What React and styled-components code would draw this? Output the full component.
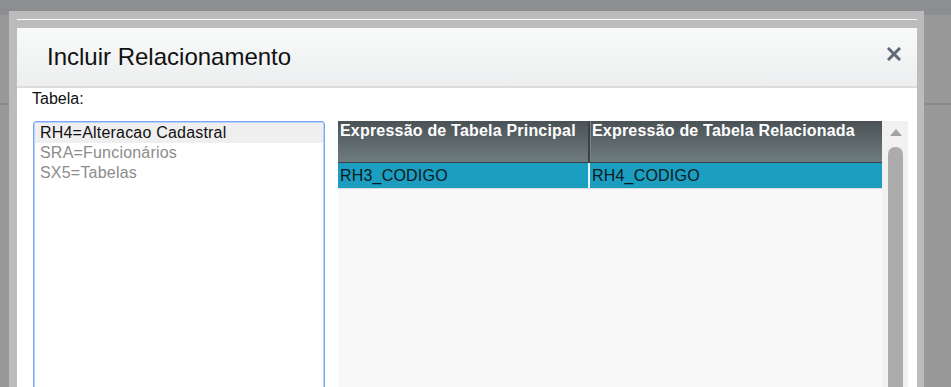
import React from "react";
import styled, { createGlobalStyle } from "styled-components";

const GlobalStyle = createGlobalStyle`
  html, body {
    margin: 0;
    height: 100%;
    overflow: hidden;
  }
  body {
    font-family: "Liberation Sans", Arial, sans-serif;
    background: linear-gradient(
      to bottom,
      #8c8e92 0,
      #8c8e92 15px,
      #999999 15px,
      #999999 103px,
      #8b8b8b 103px,
      #8b8b8b 105px,
      #999999 105px
    );
  }
`;

const tables = [
  { label: "RH4=Alteracao Cadastral", selected: true },
  { label: "SRA=Funcionários" },
  { label: "SX5=Tabelas" },
];

const columns = ["Expressão de Tabela Principal", "Expressão de Tabela Relacionada"];
const rows = [["RH3_CODIGO", "RH4_CODIGO"]];

const App = () => {
  return (
    <>
      <GlobalStyle />
      <Dialog>
        <TopRule />
        <Content>
          <Header>
            <Title>Incluir Relacionamento</Title>
            <CloseButton aria-label="Fechar">
              <svg width="14" height="14" viewBox="0 0 14 14">
                <path
                  d="M2 2 L12 12 M12 2 L2 12"
                  stroke="#5f6a76"
                  strokeWidth="3"
                  strokeLinecap="square"
                />
              </svg>
            </CloseButton>
          </Header>
          <Body>
            <Label>Tabela:</Label>
            <Panels>
              <ListBox>
                {tables.map((t) => (
                  <ListItem key={t.label} selected={t.selected}>
                    {t.label}
                  </ListItem>
                ))}
              </ListBox>
              <Grid>
                <HeadRow>
                  {columns.map((c) => (
                    <HeadCell key={c}>{c}</HeadCell>
                  ))}
                </HeadRow>
                {rows.map((r, i) => (
                  <DataRow key={i} active={i === 0}>
                    {r.map((v) => (
                      <DataCell key={v}>{v}</DataCell>
                    ))}
                  </DataRow>
                ))}
              </Grid>
              <ScrollBar>
                <ArrowUp />
                <Thumb />
              </ScrollBar>
            </Panels>
          </Body>
        </Content>
      </Dialog>
    </>
  );
};

const Dialog = styled.div`
  margin: 11px 0 0 9px;
  width: 915px;
  height: 420px;
  box-sizing: border-box;
  padding: 8px 7px 0 8px;
  background: #bcbcbc;
  display: flex;
  flex-direction: column;
`;

const TopRule = styled.div`
  height: 1px;
  background: #ffffff;
  margin-bottom: 8px;
`;

const Content = styled.div`
  flex: 1;
  background: #ffffff;
  display: flex;
  flex-direction: column;
`;

const Header = styled.div`
  height: 58px;
  display: flex;
  align-items: center;
  justify-content: space-between;
  padding: 0 16px 0 30px;
  background: linear-gradient(to bottom, #f9fafa, #eceeef);
  border-bottom: 2px solid #dcdcdc;
`;

const Title = styled.h1`
  margin: 0;
  font-size: 24px;
  font-weight: normal;
  color: #111;
`;

const CloseButton = styled.button`
  border: none;
  background: transparent;
  padding: 0;
  margin-top: -7px;
  width: 14px;
  height: 14px;
  display: flex;
  cursor: pointer;
`;

const Body = styled.div`
  flex: 1;
  padding: 2px 0 0 15px;
  display: flex;
  flex-direction: column;
`;

const Label = styled.div`
  font-size: 16px;
  color: #111;
  line-height: 18px;
`;

const Panels = styled.div`
  flex: 1;
  display: flex;
  margin-top: 13px;
  padding-left: 1px;
`;

const ListBox = styled.div`
  width: 292px;
  box-sizing: border-box;
  border: 1px solid #79a6f6;
  box-shadow: inset 0 0 0 1px #b9d1fb;
  border-radius: 3px;
  padding: 1px;
  display: flex;
  flex-direction: column;
`;

const ListItem = styled.div`
  font-size: 16px;
  letter-spacing: 0.2px;
  line-height: 18px;
  padding: 1px 5px;
  color: ${({ selected }) => (selected ? "#111" : "#8c8c8c")};
  background: ${({ selected }) => (selected ? "#efefef" : "transparent")};
  white-space: nowrap;
`;

const Grid = styled.div`
  margin-left: 13px;
  width: 544px;
  background: #f8f8f8;
  display: flex;
  flex-direction: column;
`;

const HeadRow = styled.div`
  display: grid;
  grid-template-columns: 250px 1fr;
  height: 41px;
  background: linear-gradient(to bottom, #4a5256, #6f7c7d);
  border-bottom: 1px solid #394043;
`;

const HeadCell = styled.div`
  font-size: 16px;
  font-weight: bold;
  letter-spacing: 0.2px;
  color: #ffffff;
  line-height: 18px;
  padding: 1px 2px;
  white-space: nowrap;
  overflow: hidden;
  & + & {
    border-left: 2px solid #3c4245;
    box-shadow: inset 1px 0 0 #7b8688;
  }
`;

const DataRow = styled.div`
  display: grid;
  grid-template-columns: 250px 1fr;
  height: 25px;
  background: ${({ active }) => (active ? "#1c9ec0" : "transparent")};
  border-bottom: 1px solid #dcdcdc;
`;

const DataCell = styled.div`
  font-size: 16px;
  letter-spacing: 0.2px;
  color: #0b1a1e;
  line-height: 18px;
  padding: 4px 2px 0;
  white-space: nowrap;
  & + & {
    border-left: 2px solid #e6f3f7;
  }
`;

const ScrollBar = styled.div`
  width: 26px;
  background: #f1f1f1;
  display: flex;
  flex-direction: column;
  align-items: center;
  padding-top: 8px;
  box-sizing: border-box;
`;

const ArrowUp = styled.div`
  width: 0;
  height: 0;
  border-left: 6px solid transparent;
  border-right: 6px solid transparent;
  border-bottom: 7px solid #a3a3a3;
  margin-left: 1px;
`;

const Thumb = styled.div`
  margin-top: 11px;
  margin-left: 1px;
  width: 15px;
  flex: 1;
  background: #acacac;
  border-radius: 7px 7px 0 0;
`;

export default App;
